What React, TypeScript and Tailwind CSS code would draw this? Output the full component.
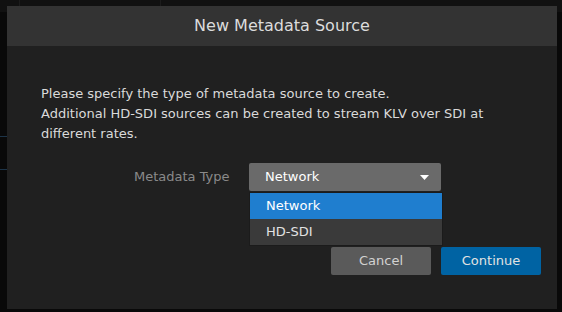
const font = "font-['DejaVu_Sans',sans-serif]";

const Caret = () => (
  <svg width="9" height="5" viewBox="0 0 9 5" className="shrink-0">
    <path d="M0 0 H9 L4.5 5 Z" fill="#ffffff" />
  </svg>
);

const MetadataSelect = () => (
  <div className="relative">
    <div className="flex h-[28px] w-[192px] items-center justify-between rounded-[2px] bg-[#6a6a6a] pl-[16px] pr-[12px] text-[13px] text-white">
      <span>Network</span>
      <Caret />
    </div>

    {/* Open menu */}
    <div className="absolute left-0 top-[29px] z-10 w-[194px] border border-[#1b1b1b] bg-[#3a3a3a] text-[13px]">
      <div className="flex h-[26px] items-center bg-[#1f7ecf] pl-[16px] text-white">Network</div>
      <div className="flex h-[26px] items-center pl-[16px] text-[#e2e2e2]">HD-SDI</div>
    </div>
  </div>
);

export default function App() {
  return (
    <div className={`relative h-[312px] w-[562px] overflow-hidden bg-[#090909] ${font}`}>
      {/* page behind the dialog */}
      <div className="flex h-[12px] bg-[#111111]">
        <div className="w-[20px] border-r border-[#1c1c1c]" />
        <div className="w-[141px] border-r border-[#1c1c1c]" />
      </div>
      <div className="mt-[124px] h-px w-[7px] bg-[#1d3448]" />
      <div className="mt-[32px] h-px w-[7px] bg-[#1d3448]" />

      {/* Dialog */}
      <div className="absolute left-[7px] top-[6px] flex h-[303px] w-[550px] flex-col bg-[#202020]">
        <div className="flex h-[40px] items-center justify-center bg-[#333333] text-[16px] text-[#dcdcdc]">
          New Metadata Source
        </div>

        <div className="flex flex-1 flex-col">
          <p className="pl-[34px] pr-[30px] pt-[38px] text-[13px] leading-[20px] text-[#dadada]">
            Please specify the type of metadata source to create.
            <br />
            Additional HD-SDI sources can be created to stream KLV over SDI at different rates.
          </p>

          <div className="mt-[19px] flex items-center pl-[127px]">
            <label className="w-[115px] text-[13px] text-[#8a8a8a]">Metadata Type</label>
            <MetadataSelect />
          </div>

          <div className="mt-[56px] flex justify-end gap-[10px] pr-[16px] text-[13px]">
            <button className="h-[28px] w-[100px] rounded-[2px] bg-[#5a5a5a] text-[#d2d2d2]">Cancel</button>
            <button className="h-[28px] w-[100px] rounded-[2px] bg-[#0063a3] text-[#e2e2e2]">Continue</button>
          </div>
        </div>
      </div>
    </div>
  );
}
